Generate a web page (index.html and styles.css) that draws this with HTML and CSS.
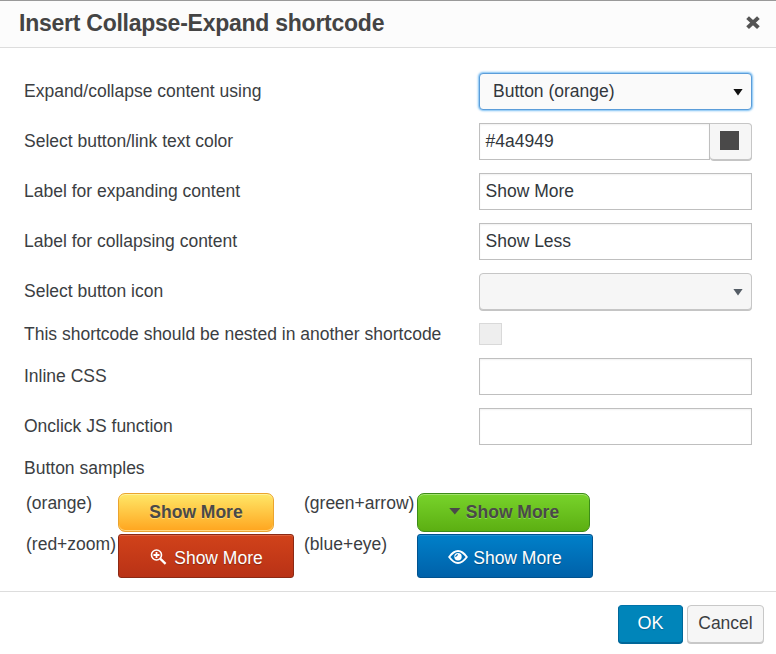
FILE: index.html
```html
<!DOCTYPE html>
<html lang="en">
<head>
<meta charset="utf-8">
<title>Insert Collapse-Expand shortcode</title>
<link rel="stylesheet" href="styles.css">
</head>
<body>
<div class="dialog">
  <header class="head">
    <h1 class="title"><span>Insert Collapse-Expand shortcode</span></h1>
    <svg class="close" width="16" height="16" viewBox="0 0 16 16"><path d="M2.6 2.6L13.4 12.6M13.4 2.6L2.6 12.6" stroke="#555" stroke-width="4"/></svg>
  </header>
  <main class="body">
    <div class="row"><label>Expand/collapse content using</label><div class="field select focus"><span>Button (orange)</span><i class="caret"></i></div></div>
    <div class="row"><label>Select button/link text color</label><div class="picker"><div class="field">#4a4949</div><div class="swatch"><i></i></div></div></div>
    <div class="row"><label>Label for expanding content</label><div class="field">Show More</div></div>
    <div class="row"><label>Label for collapsing content</label><div class="field">Show Less</div></div>
    <div class="row"><label>Select button icon</label><div class="field select"><span></span><i class="caret"></i></div></div>
    <div class="row short"><label>This shortcode should be nested in another shortcode</label><div class="check"></div></div>
    <div class="row"><label>Inline CSS</label><div class="field"></div></div>
    <div class="row"><label>Onclick JS function</label><div class="field"></div></div>
    <div class="row last"><label>Button samples</label></div>
    <div class="samples">
      <span class="name">(orange)</span>
      <div class="btn orange">Show More</div>
      <span class="name">(green+arrow)</span>
      <div class="btn green"><i class="arrow"></i>Show More</div>
      <span class="name">(red+zoom)</span>
      <div class="btn red"><svg width="17" height="16" viewBox="0 0 17 16" fill="none" stroke="#fff"><circle cx="6.5" cy="6" r="5" stroke-width="1.6"/><path d="M6.5 3v6M3.5 6h6" stroke-width="1.8"/><path d="M10.2 9.7L15.6 14.8" stroke-width="2.3"/></svg>Show More</div>
      <span class="name">(blue+eye)</span>
      <div class="btn blue"><svg width="20" height="16" viewBox="0 0 20 16" fill="none" stroke="#fff"><path d="M1.2 8Q5.5 2 10 2T18.8 8Q14.5 14 10 14T1.2 8Z" stroke-width="1.9"/><circle cx="10" cy="7.8" r="3.7" fill="#fff" stroke="none"/><path d="M7.8 8A2.2 2.2 0 0 1 10 5.8" stroke="#0069b2" stroke-width="1.1"/></svg>Show More</div>
    </div>
  </main>
  <footer class="foot">
    <div class="action ok">OK</div>
    <div class="action cancel">Cancel</div>
  </footer>
</div>
</body>
</html>
```
FILE: styles.css
```css
* { box-sizing: border-box; }
body { margin: 0; background: #fff; color: #3b3e42; font: 17.5px/22px "Liberation Sans", Arial, sans-serif; }
.dialog { width: 776px; height: 654px; display: flex; flex-direction: column; border-top: 1px solid #999; }
.head { height: 47px; flex: none; display: flex; align-items: center; justify-content: space-between; padding: 0 15px 2px 19px; background: #fcfcfc; border-bottom: 1px solid #ddd; }
.title { margin: 0; font-size: 23px; letter-spacing: -.25px; line-height: 28px; font-weight: bold; color: #444; }
.body { flex: none; height: 543px; padding: 18px 24px 0; }
.row { height: 50px; display: grid; grid-template-columns: 455px 273px; align-items: center; white-space: nowrap; }
.row.short { height: 35px; }
.row.last { height: 33px; }
.field { height: 37px; border: 1px solid #bfbfbf; background: #fff; padding: 6px 6px 0 5.5px; line-height: 22px; color: #32373c; box-shadow: inset 0 1px 2px rgba(0,0,0,.06); }
.select { display: flex; justify-content: space-between; background: #f6f6f6; border-color: #c6c6c6; border-radius: 4px; box-shadow: 0 1px 0 #c4c4c4; padding: 6px 8px 0 13px; }
.select.focus { background: #fafafa; border-color: #5b9dd9; box-shadow: 0 0 2px 1px rgba(90,175,240,.8); }
.caret { margin-top: 9px; width: 10px; height: 7px; background: #555d66; clip-path: polygon(0 0, 100% 0, 50% 100%); }
.focus .caret { background: #111; }
.picker { display: flex; }
.picker .field { width: 231px; }
.swatch { width: 42px; height: 37px; background: #f6f6f6; border: 1px solid #c6c6c6; border-left: 0; border-radius: 0 4px 4px 4px; box-shadow: 0 1px 0 #c4c4c4; display: flex; align-items: center; justify-content: center; }
.swatch i { width: 19px; height: 19px; margin: 0 2px 1px 0; background: #4a4949; }
.check { width: 23px; height: 22px; background: #eee; border: 1px solid #d9d9d9; }
.samples { display: grid; grid-template-columns: 92px 186px 113px 176px; grid-template-rows: 41px 44px; padding: 9px 0 0 2px; white-space: nowrap; }
.name { margin-top: -1px; }
.btn { display: flex; align-items: center; justify-content: center; }
.orange, .green { height: 39px; padding-bottom: 2px; border-radius: 7px; font-weight: bold; color: #4a4949; }
.orange { width: 156px; border: 1px solid #eba42e; background: linear-gradient(#ffe767, #ffa51f); box-shadow: inset 0 1px 0 #fff29a, inset 0 -1px 0 #ffd884; text-shadow: 0 1px 0 #ffdc72; }
.green { width: 173px; padding-left: 1px; border: 1px solid #3c8c18; background: linear-gradient(#78d32b, #5caf12); box-shadow: inset 0 1px 0 #a3e26d; text-shadow: 0 1px 0 #8ad850; }
.arrow { width: 12px; height: 7px; margin: 0 5px 1px 0; background: #4a4949; clip-path: polygon(0 0, 100% 0, 50% 100%); }
.red, .blue { height: 44px; width: 176px; border-radius: 3px; color: #fff; padding-top: 4px; text-shadow: 0 1px 1px rgba(0,0,0,.3); }
.red { padding-left: 1px; border: 1px solid #8c2914; background: linear-gradient(#d1421a, #b93216); box-shadow: inset 0 1px 0 #dc613b; }
.blue { border: 1px solid #00528f; background: linear-gradient(#0080c9, #0061a9); box-shadow: inset 0 1px 0 #218fd0; }
.red svg { margin: 0 7px 3px 0; }
.blue svg { margin: 0 5px 2px 0; }
.foot { flex: 1; border-top: 1px solid #ddd; display: flex; justify-content: flex-end; gap: 4px; padding: 13px 12px 0 0; }
.action { height: 38px; border-radius: 4px; padding-top: 6px; text-align: center; border: 1px solid #c8c8c8; }
.ok { width: 65px; background: #0085ba; border-color: #0073aa #006799 #006799; color: #fff; box-shadow: 0 1px 0 #006799; text-shadow: 0 1px 1px #006799; font-size: 18px; }
.cancel { width: 77px; background: #f6f6f6; box-shadow: 0 1px 0 #c8c8c8; }
```
